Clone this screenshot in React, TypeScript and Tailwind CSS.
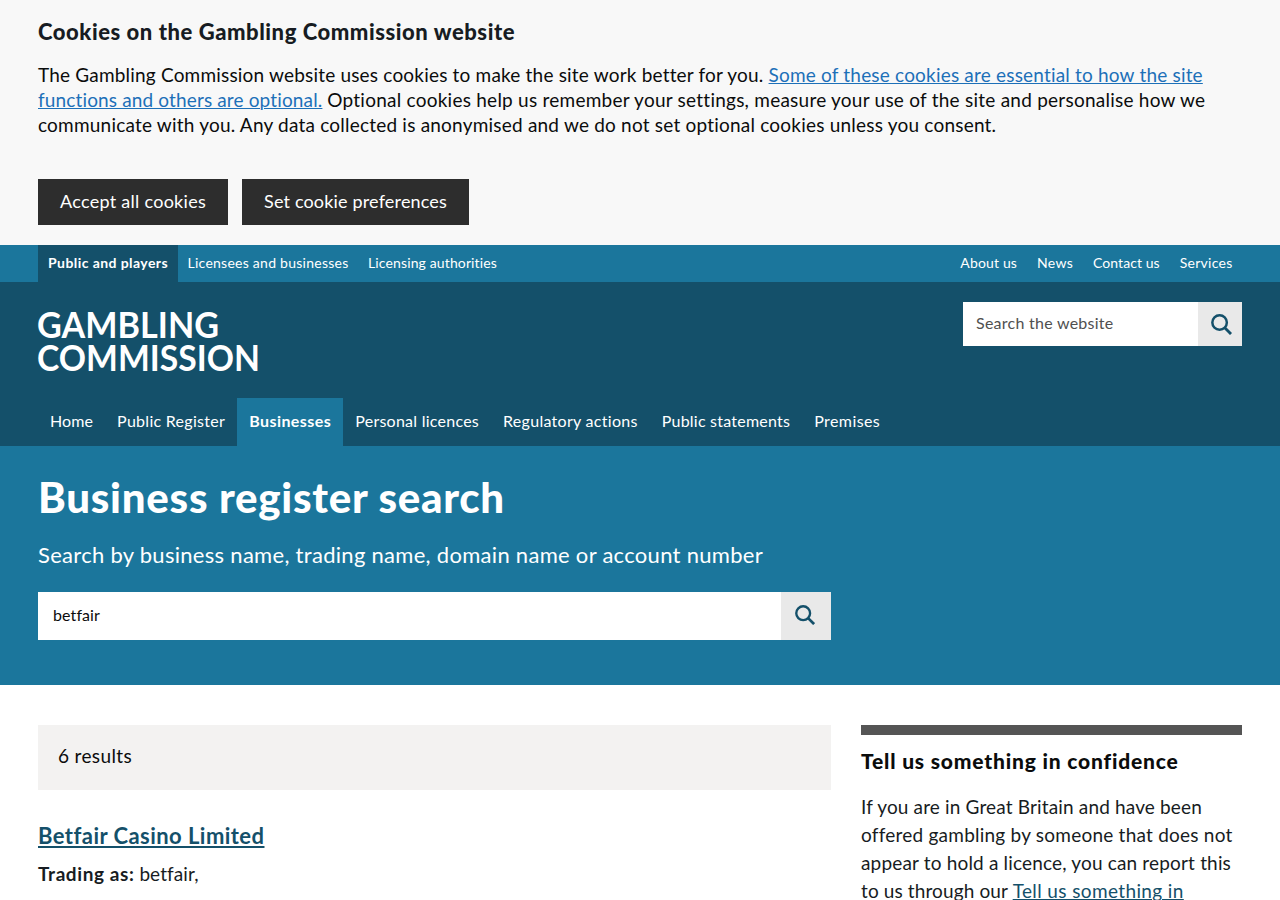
const cookieLink = "text-[#1d70b8] underline decoration-1 underline-offset-[1px]";

function SearchIcon({ className }: { className: string }) {
  return (
    <svg className={className} viewBox="0 0 22 22" fill="none" stroke="#14506a">
      <circle cx="9" cy="9" r="7.6" strokeWidth="2.6" />
      <path d="M14.4 14.4 L21 21" strokeWidth="3" />
    </svg>
  );
}

function CookieBanner() {
  return (
    <section className="h-[245px] bg-[#f8f8f8] px-[38px] pt-[17px]">
      <h2 className="text-[22px] leading-[30px] font-black tracking-[0.555px] text-[#171c22]">
        Cookies on the Gambling Commission website
      </h2>
      <p className="mt-[15px] text-[19px] leading-[25px] whitespace-nowrap">
        <span className="tracking-[0.19px]">The Gambling Commission website uses cookies to make the site work better for you. </span>
        <a className={cookieLink}>
          <span className="tracking-[0.19px]">Some of these cookies are essential to how the site</span>
          <br />
          <span className="tracking-[0.14px]">functions and others are optional.</span>
        </a>{" "}
        <span className="tracking-[0.242px]">
          Optional cookies help us remember your settings, measure your use of the site and personalise how we
        </span>
        <br />
        <span className="tracking-[0.21px]">
          communicate with you. Any data collected is anonymised and we do not set optional cookies unless you consent.
        </span>
      </p>
      <div className="mt-[42px] flex gap-[14px] text-[18px] text-white">
        <button className="h-[46px] w-[190px] bg-[#2d2d2d] pb-[2px] tracking-[0.277px]">Accept all cookies</button>
        <button className="h-[46px] w-[227px] bg-[#2d2d2d] pb-[2px] tracking-[0.168px]">Set cookie preferences</button>
      </div>
    </section>
  );
}

function AudienceNav() {
  return (
    <nav className="flex h-[37px] justify-between bg-[#1b769c] px-[38px] text-[14px] leading-[36px] whitespace-nowrap text-white">
      <div className="flex">
        <a className="w-[140px] bg-[#14506a] px-[10px] font-bold tracking-[0.425px]">Public and players</a>
        <a className="w-[180px] pl-[9.5px] tracking-[0.256px]">Licensees and businesses</a>
        <a className="pl-[10px] tracking-[0.13px]">Licensing authorities</a>
      </div>
      <div className="flex gap-5 pr-[9.5px]">
        <a className="tracking-[0.15px]">About us</a>
        <a className="tracking-[0.28px]">News</a>
        <a className="tracking-[0.07px]">Contact us</a>
        <a className="tracking-[0.27px]">Services</a>
      </div>
    </nav>
  );
}

function Header() {
  return (
    <header className="flex h-[164px] flex-col justify-between bg-[#14506a] px-[38px] text-white">
      <div className="flex justify-between">
        <svg
          className="mt-[28px] h-[64px] w-[222px] overflow-visible fill-white font-['Lato',sans-serif] text-[37px] font-bold"
          viewBox="0 0 222 64"
        >
          <text x="-1" y="28" textLength="182" lengthAdjust="spacingAndGlyphs">GAMBLING</text>
          <text x="-1" y="60.5" textLength="223" lengthAdjust="spacingAndGlyphs">COMMISSION</text>
        </svg>
        <div className="mt-5 flex h-[44px] w-[279px] bg-white text-[16px] text-[#505050]">
          <div className="flex-1 pl-[13px] leading-[42px] tracking-[0.26px]">Search the website</div>
          <button className="flex w-[44px] items-center justify-center bg-[#e9e9e9] pl-[2px]">
            <SearchIcon className="size-[21px]" />
          </button>
        </div>
      </div>
      <nav className="flex h-[48px] text-[16px] leading-[46px] whitespace-nowrap">
        <a className="px-3 tracking-[0.1px]">Home</a>
        <a className="px-3 tracking-[0.285px]">Public Register</a>
        <a className="bg-[#1b769c] px-3 font-bold tracking-[0.44px]">Businesses</a>
        <a className="px-3 tracking-[0.25px]">Personal licences</a>
        <a className="px-3 tracking-[0.29px]">Regulatory actions</a>
        <a className="px-3 tracking-[0.234px]">Public statements</a>
        <a className="px-3 tracking-[0.41px]">Premises</a>
      </nav>
    </header>
  );
}

function SearchHero() {
  return (
    <section className="h-[239px] bg-[#1b769c] px-[38px] pt-[26px] text-white">
      <div className="w-[793px]">
        <h1 className="text-[42px] leading-[50px] font-black tracking-[0.74px]">Business register search</h1>
        <p className="mt-[17px] text-[22px] leading-[32px] tracking-[0.29px]">
          Search by business name, trading name, domain name or account number
        </p>
        <div className="mt-[21px] flex h-[48px] bg-white text-[16px] text-[#0b0c0c]">
          <div className="flex-1 pl-[15px] leading-[46px] tracking-[0.1px]">betfair</div>
          <button className="flex w-[50px] items-center justify-center bg-[#e9e9e9] pr-[2px] pb-[2px]">
            <SearchIcon className="size-[20px]" />
          </button>
        </div>
      </div>
    </section>
  );
}

export default function App() {
  return (
    <div className="h-[900px] w-[1280px] overflow-hidden bg-white font-['Lato',sans-serif] text-[#0b0c0c]">
      <CookieBanner />
      <AudienceNav />
      <Header />
      <SearchHero />
      <main className="flex gap-[30px] px-[38px] pt-10">
        <div className="w-[793px]">
          <div className="h-[65px] bg-[#f3f2f1] px-5 text-[19px] leading-[62px] tracking-[0.356px]">6 results</div>
          <h2 className="mt-[30px] text-[22px] leading-[32px] font-bold tracking-[0.45px] text-[#14506a]">
            <a className="underline decoration-2 underline-offset-[2px]">Betfair Casino Limited</a>
          </h2>
          <p className="mt-[8px] text-[19px] leading-[28px] text-[#171c22]">
            <b className="tracking-[0.595px]">Trading as:</b> <span className="tracking-[0.1px]">betfair,</span>
          </p>
        </div>
        <aside className="w-[381px] border-t-[10px] border-[#555555]">
          <h3 className="mt-[11px] text-[21px] leading-[30px] font-black tracking-[0.81px]">
            Tell us something in confidence
          </h3>
          <p className="mt-[17px] text-[19px] leading-[28px] whitespace-nowrap text-[#171c22]">
            <span className="tracking-[0.155px]">If you are in Great Britain and have been</span>
            <br />
            <span className="tracking-[0.23px]">offered gambling by someone that does not</span>
            <br />
            <span className="tracking-[0.169px]">appear to hold a licence, you can report this</span>
            <br />
            <span className="tracking-[0.12px]">to us through our </span>
            <a className="tracking-[0.38px] text-[#14506a] underline decoration-1 underline-offset-[1px]">
              Tell us something in
            </a>
          </p>
        </aside>
      </main>
    </div>
  );
}
